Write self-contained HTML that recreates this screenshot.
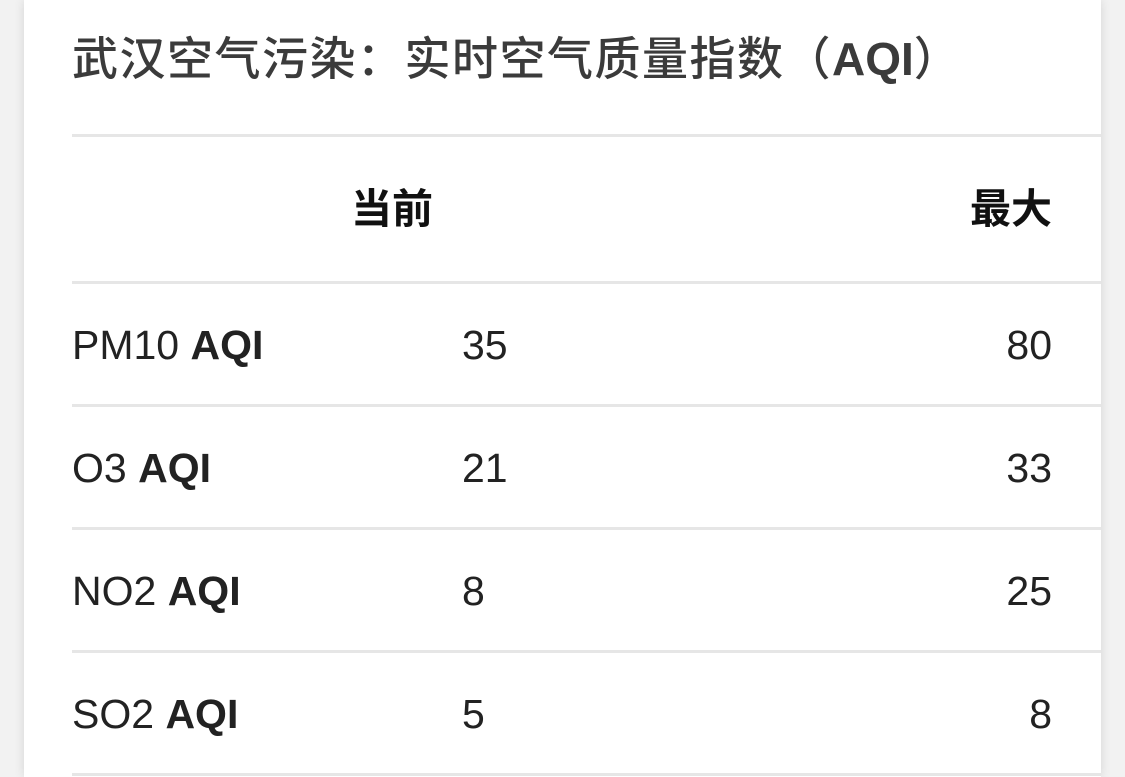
<!DOCTYPE html>
<html><head><meta charset="utf-8"><style>
body{margin:0;width:1125px;height:777px;overflow:hidden;background:#f2f2f2;font-family:"Liberation Sans","Noto Sans CJK SC",sans-serif;position:relative}
.card{position:absolute;left:24px;top:0;width:1077px;height:777px;background:#fff;box-shadow:0 0 10px rgba(0,0,0,.12)}
.t{position:absolute;left:72px;top:29px;font-size:46px;color:#3b3b3b;white-space:nowrap;letter-spacing:1.5px;font-weight:500;line-height:60px}
.l{position:absolute;left:72px;width:1029px;height:3px;background:#e6e6e6}
.x{position:absolute;font-size:41px;color:#222;white-space:nowrap;line-height:44px}
b{font-weight:bold}
</style></head><body>
<div class="card"></div>
<div class="t">武汉空气污染：实时空气质量指数（<b style="letter-spacing:0">AQI</b>）</div>
<div class="l" style="top:134px"></div>
<div class="l" style="top:281px"></div>
<div class="l" style="top:404px"></div>
<div class="l" style="top:527px"></div>
<div class="l" style="top:650px"></div>
<div class="l" style="top:773px"></div>
<div class="x" style="left:351px;top:187px;font-weight:bold;color:#111">当前</div>
<div class="x" style="right:73px;top:187px;font-weight:bold;color:#111">最大</div>

<div class="x" style="left:72px;top:323px">PM10 <b>AQI</b></div>
<div class="x" style="left:462px;top:323px">35</div>
<div class="x" style="right:73px;top:323px">80</div>

<div class="x" style="left:72px;top:446px">O3 <b>AQI</b></div>
<div class="x" style="left:462px;top:446px">21</div>
<div class="x" style="right:73px;top:446px">33</div>

<div class="x" style="left:72px;top:569px">NO2 <b>AQI</b></div>
<div class="x" style="left:462px;top:569px">8</div>
<div class="x" style="right:73px;top:569px">25</div>

<div class="x" style="left:72px;top:692px">SO2 <b>AQI</b></div>
<div class="x" style="left:462px;top:692px">5</div>
<div class="x" style="right:73px;top:692px">8</div>
</body></html>
